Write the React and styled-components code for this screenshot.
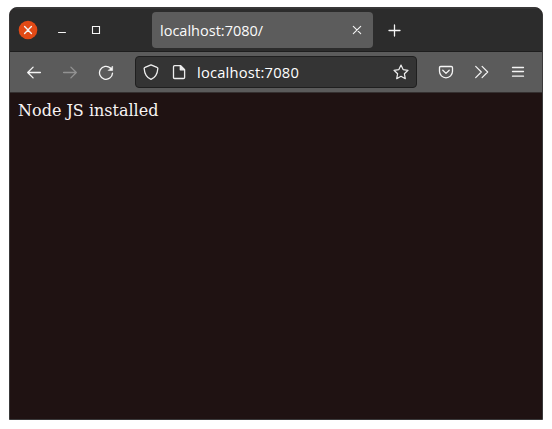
import React from 'react';
import styled, { createGlobalStyle } from 'styled-components';

const GlobalStyle = createGlobalStyle`
  *, *::before, *::after { box-sizing: border-box; }
  html, body { margin: 0; background: #fff; overflow: hidden; }
`;

const Page = styled.main`
  width: 552px;
  height: 429px;
  padding: 7px 9px 9px;
  background: #fff;
`;

const Window = styled.section`
  display: flex;
  flex-direction: column;
  width: 534px;
  height: 413px;
  border: 1px solid #3a393a;
  border-radius: 8px 8px 0 0;
  overflow: hidden;
  background: #1f1212;
`;

const TitleBar = styled.header`
  display: flex;
  align-items: flex-start;
  flex: 0 0 44px;
  background: #2c2c2c;
  border-bottom: 1px solid #1e1e1e;
  box-shadow: inset 0 1px #363636;
`;

const WindowControls = styled.div`
  display: flex;
  align-items: center;
  height: 43px;
  width: 142px;
  padding: 1px 0 0 8px;
  gap: 14px;
`;

const IconButton = styled.button`
  display: flex;
  align-items: center;
  justify-content: center;
  flex: none;
  width: ${(p) => p.$width || 20}px;
  height: ${(p) => p.$height || 20}px;
  padding: 0;
  border: 0;
  background: transparent;
  color: ${(p) => (p.$muted ? '#929292' : '#f5f5f5')};
`;

const Glyph = styled.svg`
  display: block;
  flex: none;
  width: ${(p) => p.$size || 16}px;
  height: ${(p) => p.$size || 16}px;
  fill: none;
  stroke: currentColor;
  stroke-width: ${(p) => p.$stroke || 1.3};
  stroke-linecap: round;
  stroke-linejoin: ${(p) => p.$join || 'round'};
`;

const Tab = styled.div`
  display: flex;
  align-items: center;
  width: 221px;
  height: 36px;
  margin-top: 4px;
  padding: 0 6px 0 8px;
  border-radius: 4px;
  background: #5c5c5c;
`;

const TabTitle = styled.span`
  flex: 1;
  padding-top: 1px;
  color: #fbfbfb;
  font: 14.5px/20px 'Open Sans', 'Noto Sans', sans-serif;
  letter-spacing: 0.01px;
  white-space: nowrap;
`;

const NewTab = styled(IconButton)`
  margin: 12px 0 0 11px;
`;

const Toolbar = styled.nav`
  display: flex;
  align-items: center;
  flex: 0 0 41px;
  padding: 0 6px;
  gap: 11px;
  background: #5b5b5b;
  border-bottom: 1px solid #353030;
`;

const ButtonGroup = styled.div`
  display: flex;
`;

const AddressBar = styled.div`
  display: flex;
  align-items: center;
  width: 282px;
  height: 32px;
  padding: 0 7px;
  border: 1px solid #1f1f1f;
  border-radius: 4px;
  background: #343434;
  color: #ededed;
`;

const SiteIcons = styled.div`
  display: flex;
  gap: 12px;
  margin-right: 10px;
`;

const Address = styled.span`
  flex: 1;
  padding-bottom: 1px;
  color: #fff;
  font: 14.7px/20px 'Open Sans', 'Noto Sans', sans-serif;
  letter-spacing: 0.22px;
  white-space: nowrap;
`;

const Document = styled.article`
  flex: 1;
  padding: 8px;
  color: #f7f3f3;
  font: 16px/19px 'DejaVu Serif', serif;
`;

const Message = styled.p`
  margin: 0;
`;

function Icon({ children, ...props }) {
  return <Glyph viewBox="0 0 16 16" aria-hidden="true" {...props}>{children}</Glyph>;
}

function ToolButton({ label, muted, stroke, children }) {
  return (
    <IconButton aria-label={label} $width={36} $height={36} $muted={muted}>
      <Icon $stroke={stroke}>{children}</Icon>
    </IconButton>
  );
}

export default function App() {
  return (
    <Page>
      <GlobalStyle />
      <Window>
        <TitleBar>
          <WindowControls>
            <IconButton aria-label="Close window">
              <Glyph viewBox="0 0 20 20" $size={20} $stroke={1.4}>
                <circle cx="10" cy="10" r="9.3" fill="#e24a16" stroke="none" />
                <path d="M6.6 6.6l6.8 6.8m0-6.8l-6.8 6.8" />
              </Glyph>
            </IconButton>
            <IconButton aria-label="Minimize">
              <Icon $stroke={1}><path d="M4.5 10.5h7" /></Icon>
            </IconButton>
            <IconButton aria-label="Maximize">
              <Icon $stroke={1.1} $join="miter"><path d="M4.5 4.5h7v7h-7z" /></Icon>
            </IconButton>
          </WindowControls>
          <Tab>
            <TabTitle>localhost:7080/</TabTitle>
            <IconButton aria-label="Close tab">
              <Icon $stroke={1.1}><path d="M4.3 4.3l7.4 7.4m0-7.4l-7.4 7.4" /></Icon>
            </IconButton>
          </Tab>
          <NewTab aria-label="New tab">
            <Icon $stroke={1.3}><path d="M8.5 3v11M3 8.5h11" /></Icon>
          </NewTab>
        </TitleBar>
        <Toolbar>
          <ButtonGroup>
            <ToolButton label="Back"><path d="M14.4 8.5H1.8M7.1 3.1L1.7 8.5l5.4 5.4" /></ToolButton>
            <ToolButton label="Forward" muted><path d="M1.6 8.5h12.6M8.9 3.1l5.4 5.4-5.4 5.4" /></ToolButton>
            <ToolButton label="Reload">
              <path d="M14.5 9.1A6.5 6.5 0 1 1 12.4 4l1 1" />
              <path d="M14.6 2.4v4.1h-4.1z" fill="currentColor" strokeWidth="0.6" />
            </ToolButton>
          </ButtonGroup>
          <AddressBar>
            <SiteIcons>
              <Icon $stroke={1.3}>
                <path d="M8 .8l6 2.5c.6.2.9.8.8 1.4C14.4 10.2 12 13.7 8 15.3 4 13.7 1.6 10.2 1.2 4.7c-.1-.6.2-1.2.8-1.4z" />
              </Icon>
              <Icon $stroke={1.3}>
                <path d="M3.6 1.6h6l4 4v7.8c0 .7-.4 1.1-1.1 1.1H3.6c-.7 0-1.1-.4-1.1-1.1V2.7c0-.7.4-1.1 1.1-1.1z" />
                <path d="M9.3 1.8v4h4z" fill="currentColor" />
              </Icon>
            </SiteIcons>
            <Address>localhost:7080</Address>
            <Icon $stroke={1.2}>
              <path d="M8 1.1l2.1 4.5 4.9.7-3.6 3.5.9 4.9L8 12.3l-4.3 2.4.9-4.9L1 6.3l4.9-.7z" />
            </Icon>
          </AddressBar>
          <ButtonGroup>
            <ToolButton label="Save to Pocket">
              <path d="M2.7 2.5h10.6c.8 0 1.2.4 1.2 1.2v3.6a6.5 6.5 0 0 1-13 0V3.7c0-.8.4-1.2 1.2-1.2z" />
              <path d="M4.8 6.3L8 9.4l3.2-3.1" />
            </ToolButton>
            <ToolButton label="More tools" stroke={1.2}>
              <path d="M1.7 2.4L7.3 8l-5.6 5.6M8.1 2.4L13.7 8l-5.6 5.6" />
            </ToolButton>
            <ToolButton label="Menu" stroke={1.3}>
              <path d="M2.5 3.5h11M2.5 7.5h11M2.5 12.2h11" />
            </ToolButton>
          </ButtonGroup>
        </Toolbar>
        <Document>
          <Message>Node JS installed</Message>
        </Document>
      </Window>
    </Page>
  );
}
